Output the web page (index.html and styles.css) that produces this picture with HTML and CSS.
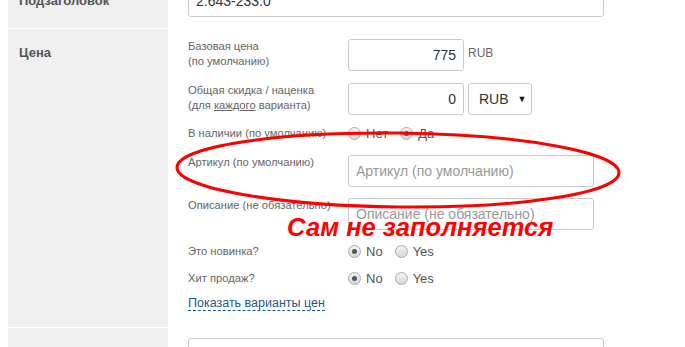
FILE: index.html
```html
<!DOCTYPE html>
<html lang="ru">
<head>
    <meta charset="UTF-8">
    <title>Цена</title>
    <link rel="stylesheet" href="styles.css">
</head>
<body>
    <div class="form">
        <div class="section section-top">
            <div class="side">Подзаголовок</div>
            <div class="main">
                <div class="input wide-top">2.643-233.0</div>
            </div>
        </div>

        <div class="section section-price">
            <div class="side">Цена</div>
            <div class="main">
                <div class="row">
                    <div class="label">Базовая цена<br>(по умолчанию)</div>
                    <div class="input num">775</div>
                    <span class="unit">RUB</span>
                </div>
                <div class="row">
                    <div class="label">Общая скидка / наценка<br>(для <u>каждого</u> варианта)</div>
                    <div class="input num">0</div>
                    <div class="select">RUB <span class="arrow">▼</span></div>
                </div>
                <div class="row row-radio row-stock">
                    <div class="label">В наличии (по умолчанию)</div>
                    <label class="radio"><span class="dot"></span>Нет</label>
                    <label class="radio"><span class="dot checked"></span>Да</label>
                </div>
                <div class="row row-sku">
                    <div class="label">Артикул (по умолчанию)</div>
                    <div class="input text placeholder">Артикул (по умолчанию)</div>
                </div>
                <div class="row row-desc">
                    <div class="label">Описание (не обязательно)</div>
                    <div class="input text placeholder">Описание (не обязательно)</div>
                </div>
                <div class="row row-radio row-new">
                    <div class="label">Это новинка?</div>
                    <label class="radio"><span class="dot checked"></span>No</label>
                    <label class="radio"><span class="dot"></span>Yes</label>
                </div>
                <div class="row row-radio row-hit">
                    <div class="label">Хит продаж?</div>
                    <label class="radio"><span class="dot checked"></span>No</label>
                    <label class="radio"><span class="dot"></span>Yes</label>
                </div>
                <a class="toggle-link" href="#">Показать варианты цен</a>
            </div>
        </div>

        <div class="section section-next">
            <div class="side"></div>
            <div class="main">
                <div class="input wide-top"></div>
            </div>
        </div>
    </div>

    <!-- пометка поверх скриншота -->
    <svg class="mark" width="685" height="347" viewBox="0 0 685 347">
        <ellipse cx="398" cy="170" rx="221" ry="37" transform="rotate(0.7 398 170)" fill="none" stroke="#f00" stroke-width="3"/>
    </svg>
    <div class="note">Сам не заполняется</div>
</body>
</html>
```

FILE: styles.css
```css
body {
    margin: 0;
    background-color: #fff;
    font-family: "Liberation Sans", Arial, sans-serif;
    overflow: hidden;
    height: 347px;
}

.form {
    margin: -15px 0 0 8px;
    width: 600px;
}

.section {
    display: flex;
    border-bottom: 1px solid #fff;
}
.side {
    width: 149px;
    flex-shrink: 0;
    padding-left: 11px;
    background-color: #f0f0f0;
    font-size: 13px;
    font-weight: bold;
    color: #555;
    line-height: 15px;
}
.main {
    padding-left: 20px;
    flex-grow: 1;
}

.section-top .side {
    padding-top: 8px;
}
.section-top .main {
    padding-bottom: 11px;
}
.section-price .side {
    padding-top: 16px;
}
.section-price .main {
    padding: 10px 0 16px 20px;
}
.section-next .main {
    padding-top: 10px;
    height: 20px;
}

.input {
    box-sizing: border-box;
    height: 32px;
    border: 1px solid #ccc;
    border-radius: 3px;
    background-color: #fff;
    font-size: 14px;
    line-height: 30px;
    color: #333;
    padding: 0 7px;
}
.wide-top {
    width: 416px;
}
.num {
    width: 116px;
    text-align: right;
}
.text {
    width: 246px;
}
.placeholder {
    color: #999;
}

.row {
    display: flex;
    align-items: flex-start;
    margin-bottom: 12px;
}
.row-stock {
    margin-top: -2px;
    margin-bottom: 14px;
}
.row-sku {
    margin-bottom: 11px;
}
.row-desc {
    margin-bottom: 13px;
}
.row-new {
    margin-bottom: 11px;
}
.row-hit {
    margin-bottom: 7px;
}
.label {
    width: 160px;
    flex-shrink: 0;
    font-size: 11.2px;
    line-height: 15px;
    color: #666;
}
.unit {
    margin-left: 4px;
    font-size: 12px;
    color: #666;
    line-height: 28px;
}
.select {
    box-sizing: border-box;
    margin-left: 4px;
    width: 64px;
    height: 32px;
    border: 1px solid #ccc;
    border-radius: 3px;
    font-size: 14px;
    line-height: 30px;
    color: #333;
    padding-left: 10px;
}
.arrow {
    font-size: 9px;
    color: #111;
    margin-left: 5px;
    vertical-align: 2px;
}

.row-radio {
    height: 16px;
    align-items: center;
}
.radio {
    display: flex;
    align-items: center;
    font-size: 13px;
    color: #555;
    margin-right: 12px;
}
.dot {
    box-sizing: border-box;
    width: 13px;
    height: 13px;
    border-radius: 50%;
    border: 1px solid #aaa;
    background: linear-gradient(#f4f4f4, #d8d8d8);
    margin-right: 5px;
    position: relative;
}
.dot.checked::after {
    content: "";
    position: absolute;
    left: 3px;
    top: 3px;
    width: 5px;
    height: 5px;
    border-radius: 50%;
    background-color: #555;
}

.toggle-link {
    display: inline-block;
    font-size: 12.5px;
    color: #1d5b8f;
    text-decoration: none;
    border-bottom: 1px dashed #1d5b8f;
    line-height: 14px;
}

.mark {
    position: absolute;
    left: 0;
    top: 0;
    pointer-events: none;
}
.note {
    position: absolute;
    left: 287px;
    top: 213px;
    font-size: 25.5px;
    font-weight: bold;
    font-style: italic;
    color: #f00;
}
```
